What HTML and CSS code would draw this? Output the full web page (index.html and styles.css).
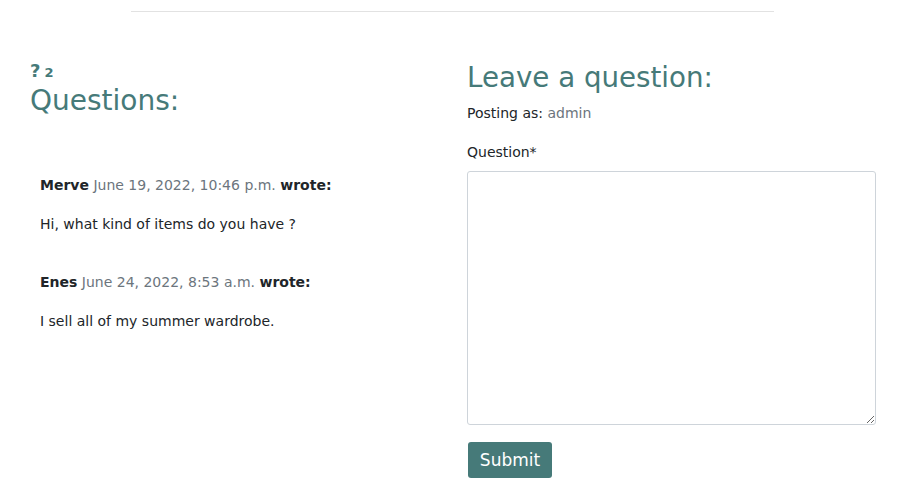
FILE: index.html
```html
<!DOCTYPE html>
<html>
<head>
<meta charset="utf-8">
<link rel="stylesheet" href="styles.css">
</head>
<body>
<hr class="divider">
<div class="row">
  <section class="col left">
    <div class="count"><span class="qmark">?</span><span class="num">2</span></div>
    <h2 class="title">Questions:</h2>
    <div class="comments">
      <div class="comment">
        <p class="meta"><b>Merve</b> <span class="date">June 19, 2022, 10:46 p.m.</span> <b>wrote:</b></p>
        <p class="body">Hi, what kind of items do you have ?</p>
      </div>
      <div class="comment">
        <p class="meta"><b>Enes</b> <span class="date">June 24, 2022, 8:53 a.m.</span> <b>wrote:</b></p>
        <p class="body">I sell all of my summer wardrobe.</p>
      </div>
    </div>
  </section>
  <section class="col right">
    <h2 class="title">Leave a question:</h2>
    <p class="posting">Posting as: <span class="user">admin</span></p>
    <label class="label" for="q">Question*</label>
    <textarea id="q" class="field"></textarea>
    <button class="btn">Submit</button>
  </section>
</div>
</body>
</html>
```
FILE: styles.css
```css
html, body {
  margin: 0;
  padding: 0;
  background: #fff;
}
body {
  font-family: "DejaVu Sans", "Noto Sans", sans-serif;
  font-size: 14px;
  color: #212529;
}
.divider {
  margin: 11px 124px 0 131px;
  border: 0;
  border-top: 1px solid #e2e2e2;
  height: 0;
}
.row {
  display: grid;
  grid-template-columns: 437px 409px;
  padding-left: 30px;
  margin-top: 50px;
}
.title {
  margin: 0;
  font-weight: 500;
  color: #467a79;
  font-size: 28px;
  line-height: 32px;
}
.right .title { font-size: 27.7px; }
.left .title { margin-top: 5px; }
.count {
  color: #467a79;
  font-weight: 700;
  line-height: 18px;
  height: 18px;
}
.qmark { font-size: 18px; }
.num { font-size: 13px; margin-left: 4px; }
.comments {
  padding: 58px 0 0 10px;
}
.comment { margin-bottom: 38px; }
.meta, .body {
  margin: 0;
  line-height: 20px;
}
.meta { margin-bottom: 19px; }
.date { color: #6c757d; }
.posting {
  margin: 8px 0 0;
  line-height: 22px;
}
.user { color: #6c757d; }
.label {
  display: block;
  margin-top: 17px;
  line-height: 22px;
}
.field {
  display: block;
  box-sizing: border-box;
  width: 409px;
  height: 254px;
  margin-top: 8px;
  border: 1px solid #ced4da;
  border-radius: 3px;
  resize: vertical;
}
.btn {
  margin: 17px 0 0 1px;
  background: #467a79;
  color: #fff;
  border: 0;
  border-radius: 3px;
  font-family: inherit;
  font-size: 17px;
  padding: 0;
  height: 36px;
  width: 84px;
}
```
